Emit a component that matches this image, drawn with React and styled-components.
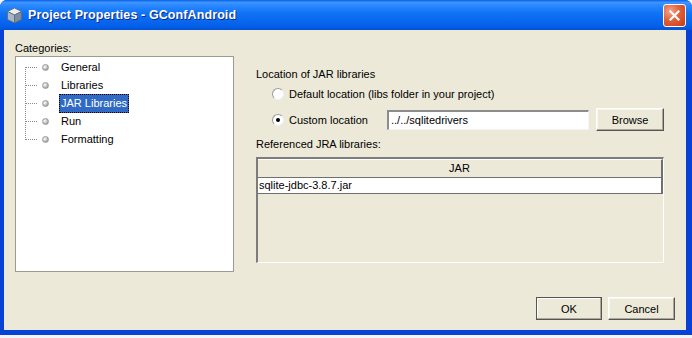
import React from 'react'
import styled, { createGlobalStyle } from 'styled-components'

const GlobalStyle = createGlobalStyle`
  html, body {
    margin: 0;
    padding: 0;
    background: #f4f4f4;
  }
  body {
    font-family: "Liberation Sans", Arial, sans-serif;
    font-size: 11px;
    color: #000;
  }
`

const Window = styled.div`
  width: 692px;
  height: 335px;
  display: flex;
  flex-direction: column;
  background: #0841d6;
  border-radius: 7px 7px 0 0;
  overflow: hidden;
`

const TitleBar = styled.div`
  height: 30px;
  flex: none;
  display: flex;
  align-items: center;
  padding: 0 6px 0 6px;
  background: linear-gradient(
    #0a5fe4 0%,
    #3d95ff 8%,
    #2a88ff 18%,
    #0f72f5 45%,
    #0461ea 85%,
    #0353d8 100%
  );
`

const TitleText = styled.span`
  margin-left: 5px;
  flex: 1;
  color: #fff;
  font-weight: bold;
  font-size: 12.5px;
  letter-spacing: 0.1px;
  text-shadow: 1px 1px 0 #0a2a8a;
`

const CloseButton = styled.div`
  width: 21px;
  height: 21px;
  margin-right: 0;
  border: 1px solid #fff;
  border-radius: 3px;
  background: radial-gradient(circle at 30% 30%, #f3a58a 0%, #e2603a 45%, #c63a12 100%);
  display: flex;
  align-items: center;
  justify-content: center;
`

const Body = styled.div`
  flex: 1;
  margin: 0 6px 5px 4px;
  background: #ece9d8;
  display: flex;
  flex-direction: column;
  padding: 10px 11px;
`

const Main = styled.div`
  display: grid;
  grid-template-columns: 219px 408px;
  column-gap: 22px;
`

const Column = styled.div`
  display: flex;
  flex-direction: column;
  padding-top: ${({ $top }) => $top || 0}px;
`

const Label = styled.div`
  height: 16px;
  line-height: 16px;
  white-space: nowrap;
  margin-bottom: ${({ $gap }) => $gap || 0}px;
`

const TreePanel = styled.div`
  height: 216px;
  box-sizing: border-box;
  background: #fff;
  border: 1px solid #9d9d8f;
  padding-top: 1px;
  position: relative;
`

const TreeRow = styled.div`
  height: 18px;
  display: flex;
  align-items: center;
  position: relative;
`

const Connector = styled.span`
  width: 12px;
  margin-left: 9px;
  border-top: 1px dotted #8a8a8a;
  align-self: center;
`

const Bullet = styled.span`
  width: 7px;
  height: 7px;
  border-radius: 50%;
  margin-left: 5px;
  background: radial-gradient(circle at 35% 35%, #fff 0%, #c9c9c9 45%, #7d7d7d 100%);
  border: 1px solid #9a9a9a;
  box-sizing: border-box;
`

const VerticalLine = styled.span`
  position: absolute;
  left: 9px;
  top: 10px;
  height: 73px;
  border-left: 1px dotted #8a8a8a;
`

const NodeText = styled.span`
  margin-left: 10px;
  padding: 1px 1px 2px;
  line-height: 14px;
  border: 1px ${({ $selected }) => ($selected ? 'dotted #000' : 'solid transparent')};
  background: ${({ $selected }) => ($selected ? '#316ac5' : 'transparent')};
  color: ${({ $selected }) => ($selected ? '#fff' : '#000')};
`

const RadioRow = styled.div`
  display: flex;
  align-items: center;
  height: ${({ $h }) => $h}px;
  padding-left: 16px;
  margin-bottom: ${({ $gap }) => $gap || 0}px;
`

const RadioLabel = styled.label`
  display: flex;
  align-items: center;
  width: ${({ $w }) => ($w ? `${$w}px` : 'auto')};
  white-space: nowrap;
`

const RadioCircle = styled.span`
  width: 12px;
  height: 12px;
  box-sizing: border-box;
  border-radius: 50%;
  border: 1px solid #9a9a9a;
  border-right-color: #f0f0f0;
  border-bottom-color: #f0f0f0;
  background: #fff;
  margin-right: 5px;
  display: flex;
  align-items: center;
  justify-content: center;
  &::after {
    content: '';
    width: 4px;
    height: 4px;
    border-radius: 50%;
    background: ${({ $checked }) => ($checked ? '#000' : 'transparent')};
  }
`

const TextField = styled.div`
  width: 202px;
  height: 20px;
  box-sizing: border-box;
  background: #fff;
  border-top: 2px solid #8c8c8c;
  border-left: 2px solid #8c8c8c;
  border-right: 1px solid #f4f4f4;
  border-bottom: 1px solid #f4f4f4;
  padding-left: 2px;
  line-height: 17px;
`

const Button = styled.div`
  width: ${({ $w }) => $w}px;
  height: 23px;
  box-sizing: border-box;
  margin-left: ${({ $ml }) => $ml || 0}px;
  display: flex;
  align-items: center;
  justify-content: center;
  background: #ece9d8;
  border: 1px solid ${({ $default }) => ($default ? '#555' : '#fff')};
  border-right-color: #555;
  border-bottom-color: #555;
  box-shadow: inset -1px -1px 0 #aca899, inset 1px 1px 0 ${({ $default }) => ($default ? '#fff' : '#f7f6f0')};
`

const Table = styled.div`
  height: 106px;
  box-sizing: border-box;
  border-top: 2px solid #7c7c7c;
  border-left: 2px solid #7c7c7c;
  border-right: 1px solid #fff;
  border-bottom: 1px solid #fff;
  display: flex;
  flex-direction: column;
`

const HeaderCell = styled.div`
  height: 19px;
  box-sizing: border-box;
  border-top: 1px solid #fff;
  border-bottom: 1px solid #6f6f6f;
  border-right: 2px solid #6f6f6f;
  text-align: center;
  line-height: 17px;
`

const DataRow = styled.div`
  height: 16px;
  box-sizing: border-box;
  background: #fff;
  border-bottom: 1px solid #6f6f6f;
  border-right: 2px solid #6f6f6f;
  line-height: 15px;
  padding-left: 1px;
`

const ButtonBar = styled.div`
  margin-top: auto;
  display: flex;
  justify-content: flex-end;
`

const categories = [
  { label: 'General' },
  { label: 'Libraries' },
  { label: 'JAR Libraries', selected: true },
  { label: 'Run' },
  { label: 'Formatting' },
]

function AppIcon() {
  return (
    <svg width="17" height="17" viewBox="0 0 17 17">
      <path d="M8.5 1 L15.5 4.5 L8.5 8 L1.5 4.5 Z" fill="#e8eef4" stroke="#5a6a7a" strokeWidth="0.8" />
      <path d="M1.5 4.5 L8.5 8 L8.5 16 L1.5 12.5 Z" fill="#a9b6c3" stroke="#5a6a7a" strokeWidth="0.8" />
      <path d="M15.5 4.5 L8.5 8 L8.5 16 L15.5 12.5 Z" fill="#7e8e9e" stroke="#5a6a7a" strokeWidth="0.8" />
    </svg>
  )
}

export default function App() {
  return (
    <>
      <GlobalStyle />
      <Window>
        <TitleBar>
          <AppIcon />
          <TitleText>Project Properties - GConfAndroid</TitleText>
          <CloseButton>
            <svg width="11" height="11" viewBox="0 0 11 11">
              <path d="M1.5 1.5 L9.5 9.5 M9.5 1.5 L1.5 9.5" stroke="#fff" strokeWidth="2.2" strokeLinecap="square" />
            </svg>
          </CloseButton>
        </TitleBar>
        <Body>
          <Main>
            <Column>
              <Label>Categories:</Label>
              <TreePanel>
                <VerticalLine />
                {categories.map(({ label, selected }) => (
                  <TreeRow key={label}>
                    <Connector />
                    <Bullet />
                    <NodeText $selected={selected}>{label}</NodeText>
                  </TreeRow>
                ))}
              </TreePanel>
            </Column>
            <Column $top={26}>
              <Label $gap={4}>Location of JAR libraries</Label>
              <RadioRow $h={16} $gap={6}>
                <RadioLabel>
                  <RadioCircle />
                  Default location (libs folder in your project)
                </RadioLabel>
              </RadioRow>
              <RadioRow $h={23} $gap={5}>
                <RadioLabel $w={115}>
                  <RadioCircle $checked />
                  Custom location
                </RadioLabel>
                <TextField>../../sqlitedrivers</TextField>
                <Button $w={68} $ml={7}>Browse</Button>
              </RadioRow>
              <Label $gap={5}>Referenced JRA libraries:</Label>
              <Table>
                <HeaderCell>JAR</HeaderCell>
                <DataRow>sqlite-jdbc-3.8.7.jar</DataRow>
              </Table>
            </Column>
          </Main>
          <ButtonBar>
            <Button $w={66} $default>OK</Button>
            <Button $w={67} $ml={6}>Cancel</Button>
          </ButtonBar>
        </Body>
      </Window>
    </>
  )
}
